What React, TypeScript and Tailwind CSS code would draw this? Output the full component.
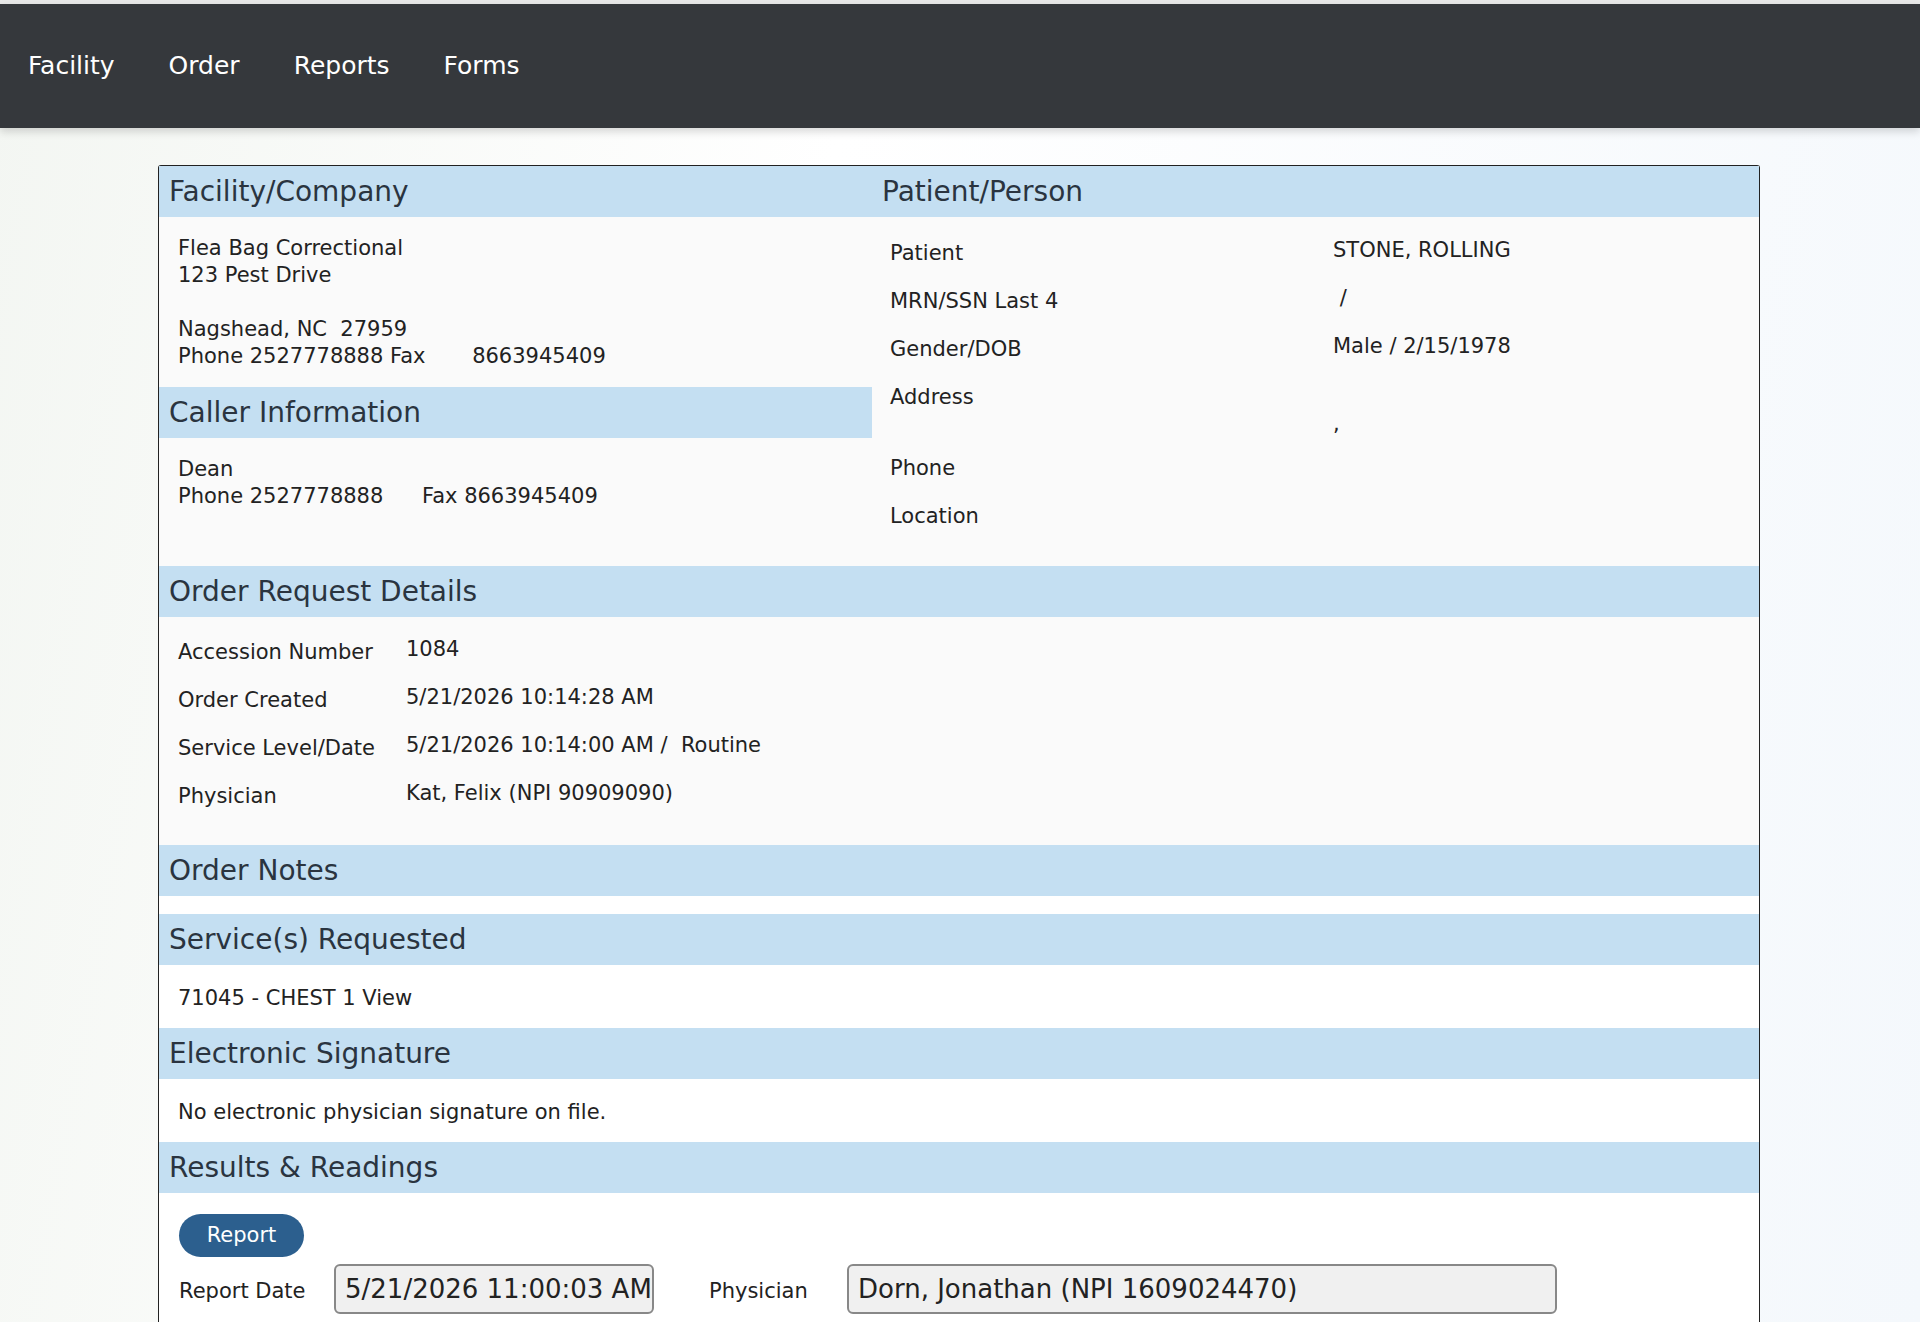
export default function App() {
  const f = { fontFamily: '"DejaVu Sans", Verdana, sans-serif' };
  const H = ({ children, cls = "" }: { children: React.ReactNode; cls?: string }) => (
    <div className={`bg-[#c4dff2] h-[51px] flex items-center px-[10px] text-[28px] text-[#2a3440] ${cls}`}>{children}</div>
  );
  const pRow = (l: string, v: string, extra = "") => (
    <div className={`flex ${extra}`}>
      <div className="w-[443px] pt-[3px]">{l}</div>
      <div>{v}</div>
    </div>
  );
  const oRow = (l: string, v: string) => (
    <div className="flex h-[48px]">
      <div className="w-[228px] pt-[3px]">{l}</div>
      <div>{v}</div>
    </div>
  );
  return (
    <div style={f} className="w-[1920px] h-[1322px] overflow-hidden bg-[linear-gradient(100deg,#f3f6f2_0%,#ffffff_40%,#f4f8fc_100%)] text-[21px] text-[#222]">
      <div className="h-[4px] bg-[#e8e8e8]" />
      <div className="h-[124px] bg-[#35383c] flex items-center pl-[28px] gap-[54px] text-white text-[25px] shadow-[0_4px_8px_rgba(0,0,0,0.15)]">
        <span>Facility</span><span>Order</span><span>Reports</span><span>Forms</span>
      </div>
      <div className="ml-[158px] mt-[37px] w-[1602px] border border-[#222] border-b-0 rounded-t-[3px] bg-[#fafafa] h-[1200px]">
        <div className="flex">
          <div className="w-[713px]">
            <H>Facility/Company</H>
            <div className="px-[19px] pt-[18px] pb-[17px] leading-[27px]">
              <div>Flea Bag Correctional</div>
              <div>123 Pest Drive</div>
              <div className="h-[27px]" />
              <div>Nagshead, NC&nbsp; 27959</div>
              <div>Phone 2527778888 Fax <span className="ml-[40px]">8663945409</span></div>
            </div>
            <H>Caller Information</H>
            <div className="px-[19px] pt-[18px] leading-[27px]">
              <div>Dean</div>
              <div>Phone 2527778888 <span className="ml-[32px]">Fax 8663945409</span></div>
            </div>
          </div>
          <div className="flex-1">
            <H>Patient/Person</H>
            <div className="pl-[18px] pt-[20px] leading-[27px] h-[349px]">
              <div className="h-[48px]">{pRow("Patient", "STONE, ROLLING")}</div>
              <div className="h-[48px]">{pRow("MRN/SSN Last 4", "\u00a0/")}</div>
              <div className="h-[48px]">{pRow("Gender/DOB", "Male / 2/15/1978")}</div>
              <div className="h-[71px]">
                <div className="pt-[3px]">Address</div>
                <div className="ml-[443px]">,</div>
              </div>
              <div className="h-[48px] pt-[3px]">Phone</div>
              <div className="pt-[3px]">Location</div>
            </div>
          </div>
        </div>
        <H>Order Request Details</H>
        <div className="px-[19px] pt-[19px] pb-[35px] leading-[27px]">
          {oRow("Accession Number", "1084")}
          {oRow("Order Created", "5/21/2026 10:14:28 AM")}
          {oRow("Service Level/Date", "5/21/2026 10:14:00 AM /\u00a0 Routine")}
          <div className="flex">
            <div className="w-[228px] pt-[3px]">Physician</div>
            <div>Kat, Felix (NPI 90909090)</div>
          </div>
        </div>
        <H>Order Notes</H>
        <div className="h-[18px] bg-white" />
        <H>Service(s) Requested</H>
        <div className="px-[19px] h-[63px] pt-[18px] bg-white">71045 - CHEST 1 View</div>
        <H>Electronic Signature</H>
        <div className="px-[19px] h-[63px] pt-[18px] bg-white">No electronic physician signature on file.</div>
        <H>Results &amp; Readings</H>
        <div className="px-[20px] pt-[21px] bg-white h-[200px]">
          <button className="w-[125px] h-[43px] rounded-full bg-[#2c5f8e] text-white text-[21px]">Report</button>
          <div className="flex mt-[7px]">
            <div className="w-[155px] pt-[12px]">Report Date</div>
            <div className="w-[320px] h-[50px] border-2 border-[#888] rounded-[6px] bg-[#f0f0f0] flex items-center px-[9px] text-[26px] overflow-hidden whitespace-nowrap">5/21/2026 11:00:03 AM</div>
            <div className="ml-[55px] w-[138px] pt-[12px]">Physician</div>
            <div className="w-[710px] h-[50px] border-2 border-[#888] rounded-[6px] bg-[#f0f0f0] flex items-center px-[9px] text-[26px]">Dorn, Jonathan (NPI 1609024470)</div>
          </div>
        </div>
      </div>
    </div>
  );
}
